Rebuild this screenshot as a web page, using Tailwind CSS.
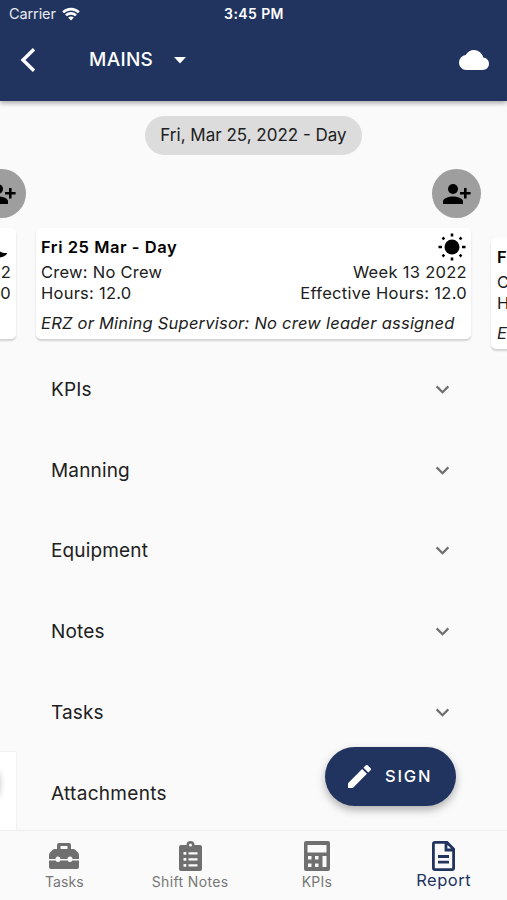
<!DOCTYPE html>
<html lang="en">
<head>
  <meta charset="UTF-8" />
  <meta name="viewport" content="width=device-width, initial-scale=1.0"/>
  <title>Shift Report</title>
  <script src="https://cdn.jsdelivr.net/npm/@tailwindcss/browser@4"></script>
</head>
<body class="bg-[#fafafa] font-['Inter',sans-serif] text-[#202020]">
  <div class="w-[507px] h-[900px] flex flex-col overflow-hidden">

    <!-- Header -->
    <header class="relative z-10 h-[101px] shrink-0 bg-[#21345f] text-white shadow-[0_2px_5px_rgba(0,0,0,0.35)]">
      <div class="h-7 grid grid-cols-3 items-center px-[9px]">
        <div class="flex items-center gap-[6px] -mt-px text-[14.5px] text-white/90">
          <span class="w-[47px] -tracking-[0.1px]">Carrier</span>
          <svg class="w-[18px] h-[14px]" viewBox="0 0 19 14" fill="none" stroke="white" stroke-width="2.8">
            <path d="M1.2 5.3a11.8 11.8 0 0 1 16.6 0"/>
            <path d="M4.2 8.5a7.5 7.5 0 0 1 10.6 0"/>
            <path d="M9.5 13.9 6.5 10.8a4.2 4.2 0 0 1 6 0z" fill="white" stroke="none"/>
          </svg>
        </div>
        <span class="-mt-px pl-px text-center text-[14px] font-semibold tracking-[0.4px] whitespace-nowrap">3:45 PM</span>
      </div>
      <div class="h-16 flex items-center pl-5 pr-[18px]">
        <svg class="w-4 h-6" viewBox="0 0 16 24" fill="none" stroke="white" stroke-width="3.4"><path d="M14 1.2 3 12l11 10.8"/></svg>
        <span class="ml-[53px] text-[19px] font-medium tracking-[0.3px]">MAINS</span>
        <svg class="ml-[21px] w-3 h-[7px]" viewBox="0 0 12 7" fill="white"><path d="M0 0h12L6 6.5z"/></svg>
        <svg class="ml-auto w-[30px] h-[20px] -mt-px" viewBox="0 4 24 16" preserveAspectRatio="none" fill="white"><path d="M19.35 10.04A7.49 7.49 0 0 0 12 4C9.11 4 6.6 5.64 5.35 8.04A5.994 5.994 0 0 0 0 14c0 3.31 2.69 6 6 6h13c2.76 0 5-2.24 5-5 0-2.64-2.05-4.78-4.65-4.96z"/></svg>
      </div>
    </header>

    <!-- Shift carousel -->
    <main class="flex-1 min-h-0 overflow-hidden">
      <div class="flex justify-center pt-[15px]">
        <span class="h-[39px] px-[15px] flex items-center rounded-full bg-[#dcdcdc] text-[17px] whitespace-nowrap">Fri, Mar 25, 2022 - Day</span>
      </div>

      <div class="flex gap-5 -ml-[419px] pt-[14px] w-[1345px]">
        <!-- Previous shift -->
        <section class="w-[435px] shrink-0">
          <div class="flex justify-end -mr-[10px]">
            <div class="w-[49px] h-[49px] rounded-full bg-[#9e9e9e] flex items-center justify-center">
              <svg class="w-7 h-5" viewBox="0 0 28 20"><circle cx="10" cy="5" r="5"/><path d="M0 20v-2.5C0 14 6 12.5 10 12.5s10 1.5 10 5V20zM21 4h2.6v4h4v2.6h-4v4H21v-4h-4V8h4z"/></svg>
            </div>
          </div>
          <div class="mt-[10px] h-[111px] px-[5px] pt-[5px] rounded-[5px] bg-white text-[16.5px] tracking-[0.25px] shadow-[0_2px_2px_rgba(0,0,0,0.16)]">
            <div class="h-7 flex items-center justify-between">
              <b>Thu 24 Mar - Night</b>
              <svg class="w-7 h-7" viewBox="0 0 28 28"><path d="M9 2C2 5 1 13 4 19c4 7 15 7 19.500 2.500l.5-1.500c-3 .5-7-1-10-3.500-4-3-6-8-5-14.500z"/></svg>
            </div>
            <div class="h-[21px] leading-[23px] flex justify-between"><span>Crew: No Crew</span><span>Week 12 2022</span></div>
            <div class="h-[21px] leading-[23px] flex justify-between"><span>Hours: 12.0</span><span>Effective Hours: 12.0</span></div>
          </div>
          <div class="mt-[413px] h-[120px] bg-white shadow-[0_0_2px_rgba(0,0,0,0.1)] flex justify-end pr-4">
            <div class="mt-1 w-[130px] h-[52px] rounded-full bg-[#eeeeee] shadow-[0_2px_6px_rgba(0,0,0,0.25)]"></div>
          </div>
        </section>

        <!-- Current shift -->
        <section class="w-[435px] shrink-0">
          <div class="flex justify-end -mr-[10px]">
            <div class="w-[49px] h-[49px] rounded-full bg-[#9e9e9e] flex items-center justify-center">
              <svg class="w-7 h-5" viewBox="0 0 28 20"><circle cx="10" cy="5" r="5"/><path d="M0 20v-2.5C0 14 6 12.5 10 12.5s10 1.5 10 5V20zM21 4h2.6v4h4v2.6h-4v4H21v-4h-4V8h4z"/></svg>
            </div>
          </div>
          <div class="mt-[10px] h-[111px] px-[5px] pt-[5px] rounded-[5px] bg-white text-[16.5px] tracking-[0.25px] shadow-[0_2px_2px_rgba(0,0,0,0.16)]">
            <div class="h-7 flex items-center justify-between">
              <span class="font-semibold text-black tracking-[0.55px]">Fri 25 Mar - Day</span>
              <svg class="w-7 h-7" viewBox="0 0 28 28" stroke="black" stroke-width="2.6">
                <circle cx="14" cy="14" r="7.5" stroke="none"/>
                <path d="M14 .5v3M14 24.5v3M.5 14h3.5M24 14h3.5M4.5 4.5l1.8 1.8M21.7 21.7l1.8 1.8M4.5 23.5l1.8-1.8M21.7 6.3l1.8-1.8"/>
              </svg>
            </div>
            <div class="h-[21px] leading-[23px] flex justify-between -mr-px"><span>Crew: No Crew</span><span class="tracking-[0.3px]">Week 13 2022</span></div>
            <div class="h-[21px] leading-[23px] flex justify-between -mr-px"><span>Hours: 12.0</span><span class="tracking-[0.3px]">Effective Hours: 12.0</span></div>
            <p class="mt-[9px] leading-[23px] italic whitespace-nowrap tracking-[0.23px]">ERZ or Mining Supervisor: No crew leader assigned</p>
          </div>

          <div class="mt-[10px] pl-[15px] pr-[21px] text-[19px] tracking-[0.15px]">
            <div class="h-[80.7px] flex items-center justify-between"><span class="pt-[2px]">KPIs</span>
              <svg class="w-[15px] h-[9px]" viewBox="0 0 16 10" fill="none" stroke="#6f6f6f" stroke-width="2.5"><path d="M1.5 1.5 8 8l6.5-6.5"/></svg></div>
            <div class="h-[80.7px] flex items-center justify-between"><span class="pt-[2px]">Manning</span>
              <svg class="w-[15px] h-[9px]" viewBox="0 0 16 10" fill="none" stroke="#6f6f6f" stroke-width="2.5"><path d="M1.5 1.5 8 8l6.5-6.5"/></svg></div>
            <div class="h-[80.7px] flex items-center justify-between"><span class="pt-[2px]">Equipment</span>
              <svg class="w-[15px] h-[9px]" viewBox="0 0 16 10" fill="none" stroke="#6f6f6f" stroke-width="2.5"><path d="M1.5 1.5 8 8l6.5-6.5"/></svg></div>
            <div class="h-[80.7px] flex items-center justify-between"><span class="pt-[2px]">Notes</span>
              <svg class="w-[15px] h-[9px]" viewBox="0 0 16 10" fill="none" stroke="#6f6f6f" stroke-width="2.5"><path d="M1.5 1.5 8 8l6.5-6.5"/></svg></div>
            <div class="h-[80.7px] flex items-center justify-between"><span class="pt-[2px]">Tasks</span>
              <svg class="w-[15px] h-[9px]" viewBox="0 0 16 10" fill="none" stroke="#6f6f6f" stroke-width="2.5"><path d="M1.5 1.5 8 8l6.5-6.5"/></svg></div>
            <div class="h-[80.7px] flex items-center tracking-[0.3px]"><span class="pt-[2px]">Attachments</span></div>
          </div>
        </section>

        <!-- Next shift -->
        <section class="w-[435px] shrink-0 pt-[69px]">
          <div class="h-[111px] px-[6px] pt-[5px] rounded-[5px] bg-white text-[16.5px] tracking-[0.25px] shadow-[0_2px_2px_rgba(0,0,0,0.16)]">
            <div class="h-7 flex items-center font-semibold text-black tracking-[0.55px]">Fri 25 Mar - Night</div>
            <div class="h-[21px] leading-[23px]">Crew: No Crew</div>
            <div class="h-[21px] leading-[23px]">Hours: 12.0</div>
            <p class="mt-[9px] leading-[23px] italic whitespace-nowrap">ERZ or Mining Supervisor: No crew leader assigned</p>
          </div>
        </section>
      </div>
    </main>

    <!-- Floating sign button -->
    <button class="absolute left-[325px] top-[747px] w-[131px] h-[59px] pl-[23px] flex items-center rounded-full bg-[#21345f] text-white shadow-[0_4px_8px_rgba(0,0,0,0.3)]">
      <svg class="w-[23px] h-[23px]" viewBox="3 3 18 18" fill="white"><path d="M3 17.25V21h3.75L17.81 9.94l-3.75-3.75L3 17.25zM20.71 7.04a1 1 0 0 0 0-1.41l-2.34-2.34a1 1 0 0 0-1.41 0l-1.83 1.83 3.75 3.75 1.83-1.83z"/></svg>
      <span class="ml-[14px] text-[16.5px] font-medium tracking-[1.8px]">SIGN</span>
    </button>

    <!-- Bottom navigation -->
    <nav class="h-[70px] shrink-0 grid grid-cols-4 border-t border-[#eeeeee] bg-[#fafafa] text-[#777777] text-[14px]">
      <div class="flex flex-col items-center pt-[11px] pl-[2px]">
        <svg class="w-[30px] h-[28px]" viewBox="0 0 30 28" fill="#6f6f6f"><path fill-rule="evenodd" d="M10 1h10q2 0 2 2v4h2q1.5 0 2.5 1L29 10.5q1 1 1 2.5v4h-6.5a2.5 2.5 0 0 0-5 0h-7a2.5 2.5 0 0 0-5 0H0v-4q0-1.5 1-2.5L3.5 8Q4.5 7 6 7h2V3q0-2 2-2zM11.5 4v3h7V4zM0 18.5h6.7a2.5 2.5 0 0 0 4.6 0h7.4a2.5 2.5 0 0 0 4.6 0H30V25q0 2-2 2H2q-2 0-2-2z"/></svg>
        <span class="mt-[3px] leading-[18px] tracking-[0.1px]">Tasks</span>
      </div>
      <div class="flex flex-col items-center pt-[10px]">
        <svg class="w-[23px] h-[30px]" viewBox="0 0 23 30" fill="#6f6f6f"><path fill-rule="evenodd" d="M2 4h5.5a4 4 0 0 1 8 0H21q2 0 2 2v22q0 2-2 2H2q-2 0-2-2V6q0-2 2-2zM11.5 2.5a1.5 1.5 0 1 0 0 3 1.5 1.5 0 1 0 0-3zM4.5 11v2.8h2.8V11zM9.5 11.2v2.3h9v-2.3zM4.5 17v2.8h2.8V17zM9.5 17.2v2.3h9v-2.3zM4.5 23v2.8h2.8V23zM9.5 23.2v2.3h9v-2.3z"/></svg>
        <span class="mt-[2px] leading-[18px] tracking-[0.35px]">Shift Notes</span>
      </div>
      <div class="flex flex-col items-center pt-[10px]">
        <svg class="w-[26px] h-[30px]" viewBox="0 0 26 30" fill="#6f6f6f"><path fill-rule="evenodd" d="M2 0h22q2 0 2 2v26q0 2-2 2H2q-2 0-2-2V2q0-2 2-2zM3.5 4v7.5h19V4zM4 15v3.5h3.5V15zM11 15v3.5h3.5V15zM4 22.5V26h3.5v-3.5zM11 22.5V26h3.5v-3.5zM18.5 15v11h4V15z"/></svg>
        <span class="mt-[2px] leading-[18px] tracking-[0.2px]">KPIs</span>
      </div>
      <div class="flex flex-col items-center pt-[10px] text-[#21345f]">
        <svg class="w-[23px] h-[30px]" viewBox="0 0 23 30" fill="none" stroke="#21345f" stroke-width="2.8"><path d="M3 1.4h12L21.6 8v19q0 1.6-1.6 1.6H3q-1.6 0-1.6-1.6V3q0-1.6 1.6-1.6zM14 1.4V9h7.6M6 15.5h11M6 21.2h11"/></svg>
        <span class="leading-[18px] text-[16.5px] tracking-[0.5px]">Report</span>
      </div>
    </nav>
  </div>
</body>
</html>
